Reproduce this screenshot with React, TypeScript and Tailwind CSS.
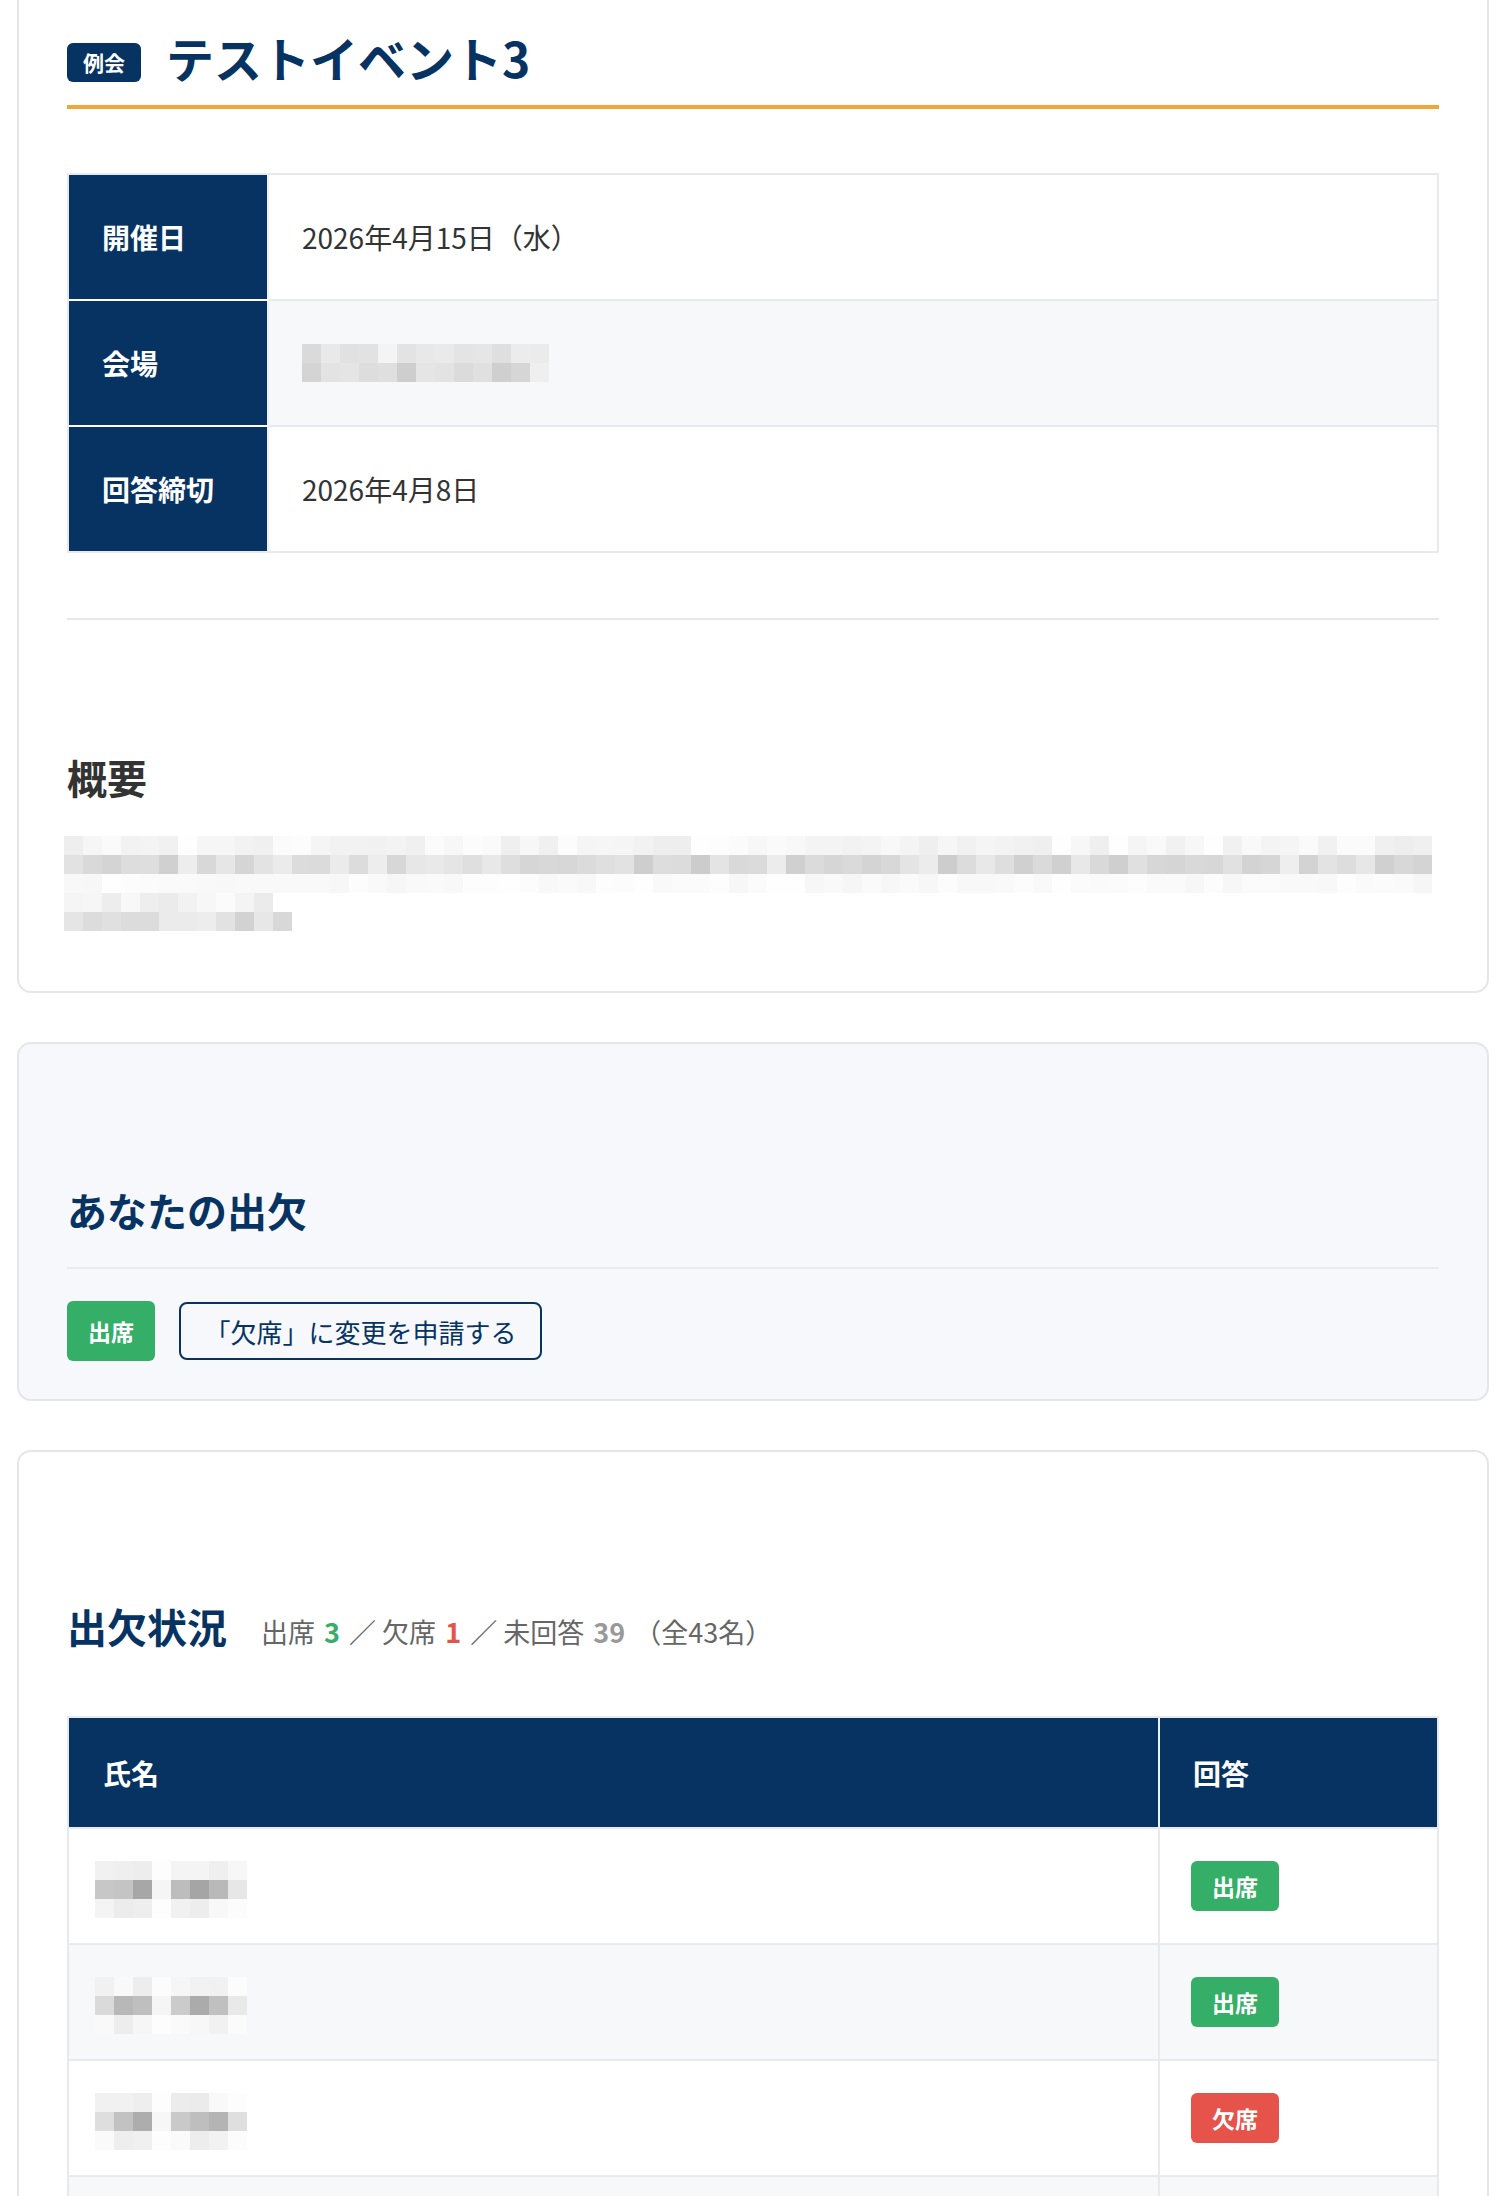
type Band = { lo: number; hi: number };

interface PixelBlurProps {
  seed: number;
  cols: number[];
  bands: Band[];
  mask?: number[];
  className?: string;
}

// pixelated stand-in for redacted text
function PixelBlur({ seed, cols, bands, mask, className = '' }: PixelBlurProps) {
  let s = seed;
  const rand = () => {
    s = (s * 16807) % 2147483647;
    return s / 2147483647;
  };
  return (
    <div className={`flex flex-col ${className}`}>
      {bands.map((b, r) => (
        <div key={r} className="flex">
          {Array.from({ length: cols[r] ?? cols[0] }).map((_, i) => {
            const raw = b.lo + rand() * (b.hi - b.lo);
            const m = mask ? mask[i % mask.length] : 1;
            const v = Math.round(255 - (255 - raw) * m);
            return (
              <div
                key={i}
                className="h-[19px] w-[19px]"
                style={{ backgroundColor: `rgb(${v},${v},${v})` }}
              />
            );
          })}
        </div>
      ))}
    </div>
  );
}

function StatusBadge({ kind, tall = false }: { kind: 'yes' | 'no'; tall?: boolean }) {
  return (
    <span
      className={`flex w-[88px] items-center justify-center rounded-[6px] text-[23px] font-bold text-white ${
        tall ? 'h-[60px]' : 'h-[50px]'
      } ${kind === 'yes' ? 'bg-[#35ae68]' : 'bg-[#e5534b]'}`}
    >
      {kind === 'yes' ? '出席' : '欠席'}
    </span>
  );
}

function InfoRow({ label, first, shaded, children }: { label: string; first?: boolean; shaded?: boolean; children: React.ReactNode }) {
  return (
    <div className="flex">
      <div
        className={`flex w-[200px] items-center border-r-2 border-r-[#eef1f5] bg-[#063362] pl-[33px] text-[28px] font-bold text-white ${
          first ? 'h-[124px]' : 'h-[126px] border-t-2 border-t-white'
        }`}
      >
        {label}
      </div>
      <div
        className={`flex flex-1 items-center pl-[33px] text-[28px] text-[#333] ${
          first ? 'h-[124px]' : 'h-[126px] border-t-2 border-t-[#e6e9ee]'
        } ${shaded ? 'bg-[#f7f8fa]' : 'bg-white'}`}
      >
        {children}
      </div>
    </div>
  );
}

function EventCard() {
  return (
    <section className="rounded-b-[14px] border-2 border-t-0 border-[#e4e6ea] bg-white px-[48px] pb-[60px]">
      <div className="flex items-center gap-[25px] border-b-4 border-[#f2a53a] pt-[27px] pb-[18px]">
        <span className="mt-[11px] flex h-[39px] items-center rounded-[6px] bg-[#063362] px-[16px] text-[21px] font-bold text-white">
          例会
        </span>
        <h1 className="text-[48px] font-bold leading-[60px] text-[#063362]">テストイベント3</h1>
      </div>

      <div className="mt-[64px] border-2 border-[#e6e9ee]">
        <InfoRow label="開催日" first>
          2026年4月15日（水）
        </InfoRow>
        <InfoRow label="会場" shaded>
          <PixelBlur
            seed={11}
            cols={[13]}
            mask={[1, 0.8, 1, 0.8, 0.6, 1, 0.9, 0.8, 1, 0.8, 1, 0.9, 0.6]}
            bands={[
              { lo: 218, hi: 240 },
              { lo: 198, hi: 236 },
            ]}
          />
        </InfoRow>
        <InfoRow label="回答締切">2026年4月8日</InfoRow>
      </div>

      <div className="mt-[65px] h-[2px] bg-[#e6e7eb]" />

      <h2 className="mt-[129px] text-[40px] font-bold leading-[56px] text-[#333]">概要</h2>
      <PixelBlur
        className="-ml-[3px] mt-[31px]"
        seed={42}
        cols={[72, 72, 72, 11, 12]}
        bands={[
          { lo: 238, hi: 254 },
          { lo: 204, hi: 238 },
          { lo: 246, hi: 254 },
          { lo: 234, hi: 252 },
          { lo: 208, hi: 240 },
        ]}
      />
    </section>
  );
}

function MyAttendanceCard() {
  return (
    <section className="mt-[49px] rounded-[14px] border-2 border-[#e4e6ea] bg-[#f6f8fb] px-[48px] pt-[138px] pb-[38px]">
      <h2 className="border-b-2 border-[#e9ebee] pb-[29px] text-[40px] font-bold leading-[56px] text-[#063362]">
        あなたの出欠
      </h2>
      <div className="mt-[32px] flex items-center gap-[24px]">
        <StatusBadge kind="yes" tall />
        <button className="flex h-[58px] w-[363px] items-center justify-center rounded-[8px] border-2 border-[#063362] text-[26px] text-[#063362]">
          「欠席」に変更を申請する
        </button>
      </div>
    </section>
  );
}

const members: { seed: number; status: 'yes' | 'no' }[] = [
  { seed: 3, status: 'yes' },
  { seed: 7, status: 'yes' },
  { seed: 19, status: 'no' },
  { seed: 23, status: 'yes' },
  { seed: 31, status: 'yes' },
];

const nameMask = [0.6, 1, 1, 0.15, 0.9, 1, 0.8, 0.35];

function AttendanceCard() {
  return (
    <section className="mt-[49px] rounded-t-[14px] border-2 border-b-0 border-[#e4e6ea] bg-white px-[48px] pt-[146px]">
      <div className="flex items-baseline gap-[34px]">
        <h2 className="text-[40px] font-bold leading-[56px] text-[#063362]">出欠状況</h2>
        <p className="text-[27px] text-[#666]">
          出席 <span className="px-[3px] font-bold text-[#35ae68]">3</span> ／ 欠席{' '}
          <span className="px-[3px] font-bold text-[#e5534b]">1</span> ／ 未回答{' '}
          <span className="px-[3px] font-bold text-[#999]">39</span> （全43名）
        </p>
      </div>

      <div className="mt-[62px] border-2 border-b-0 border-[#e6e9ee]">
        <div className="flex h-[109px] bg-[#063362] text-[28px] font-bold text-white">
          <div className="flex flex-1 items-center border-r-2 border-[#eef1f5] pl-[34px]">氏名</div>
          <div className="flex w-[277px] items-center pl-[33px]">回答</div>
        </div>
        {members.map((m, i) => (
          <div
            key={m.seed}
            className={`flex h-[116px] border-t-2 border-[#e8eaee] ${i % 2 === 1 ? 'bg-[#f7f8fa]' : 'bg-white'}`}
          >
            <div className="flex flex-1 items-center border-r-2 border-[#e8eaee] pl-[26px]">
              <PixelBlur
                className="mt-[6px]"
                seed={m.seed}
                cols={[8]}
                mask={nameMask}
                bands={[
                  { lo: 232, hi: 250 },
                  { lo: 160, hi: 205 },
                  { lo: 236, hi: 250 },
                ]}
              />
            </div>
            <div className="flex w-[277px] items-center pl-[31px]">
              <StatusBadge kind={m.status} />
            </div>
          </div>
        ))}
      </div>
    </section>
  );
}

export default function App() {
  return (
    <div className="min-h-screen bg-white pl-[17px] pr-[21px] font-['Noto_Sans_CJK_JP',sans-serif] text-[#333]">
      <EventCard />
      <MyAttendanceCard />
      <AttendanceCard />
    </div>
  );
}
